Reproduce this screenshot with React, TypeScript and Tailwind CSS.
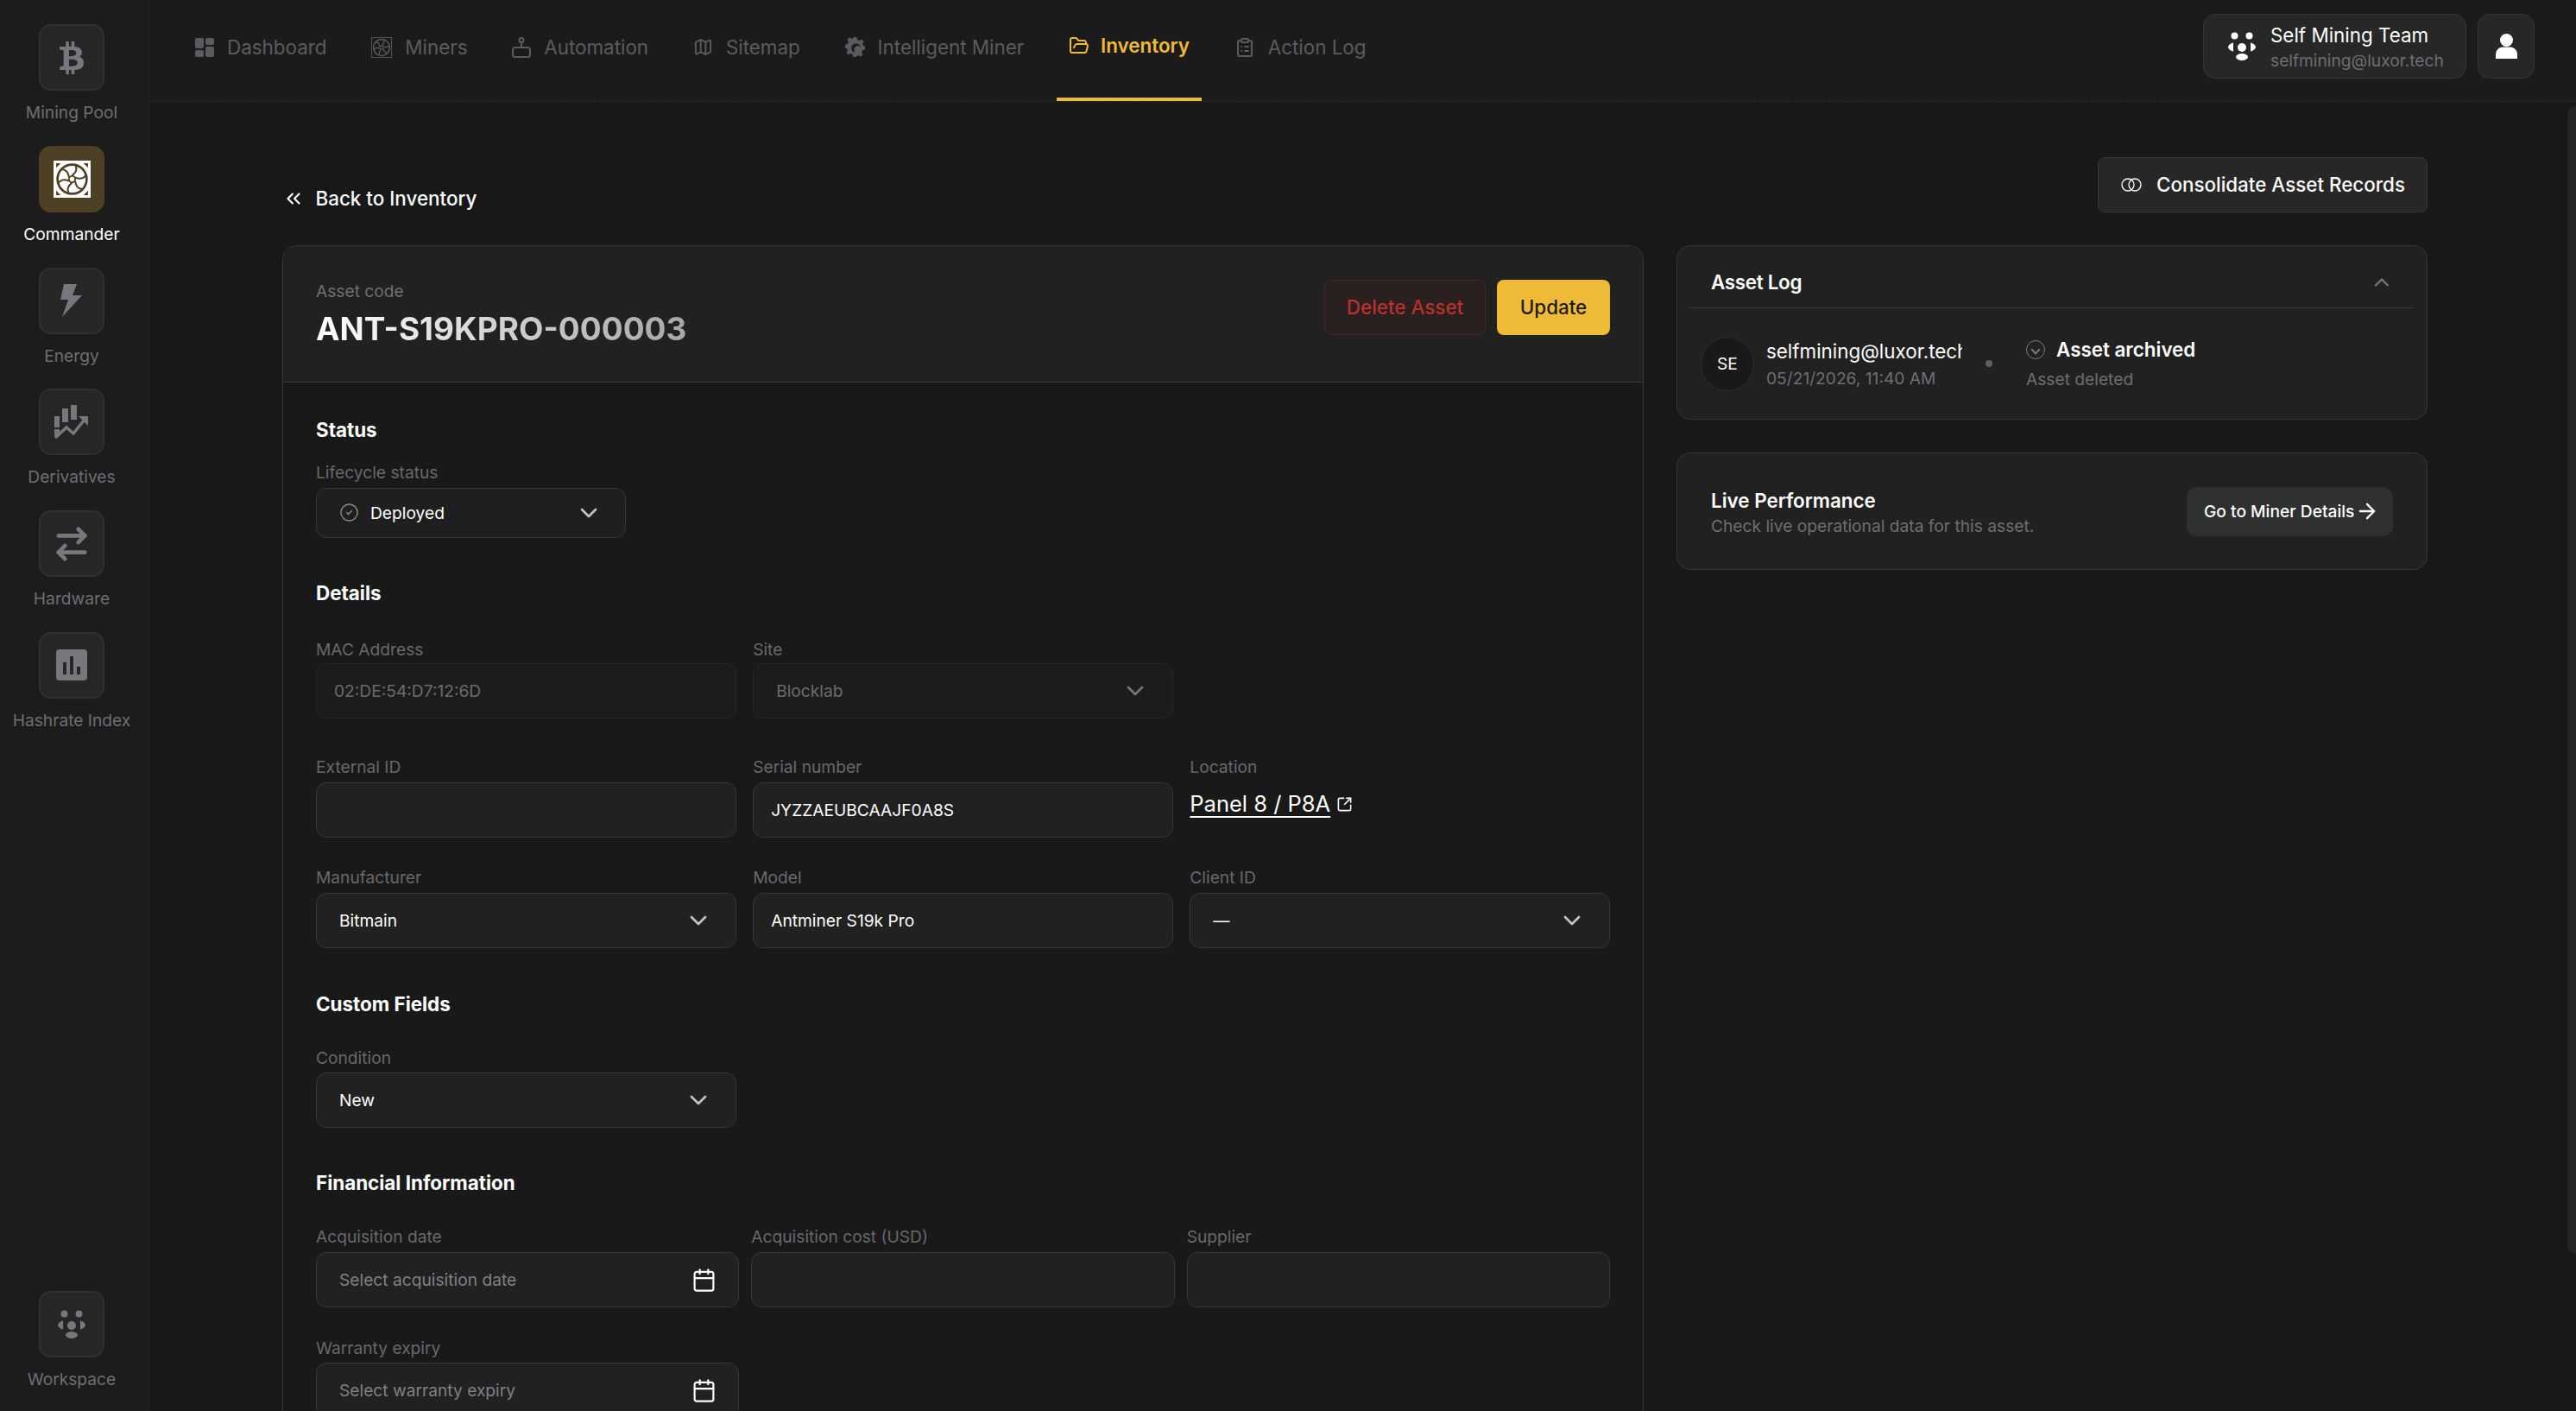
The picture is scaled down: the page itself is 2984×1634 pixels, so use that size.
import React from 'react';
import {
  ArrowRight,
  ArrowRightLeft,
  Calendar,
  ChevronDown,
  ChevronsLeft,
  ChevronUp,
  CircleCheck,
  ClipboardList,
  FolderOpen,
  Map as MapIcon,
  SquareArrowOutUpRight,
} from 'lucide-react';
import { FaBtc } from 'react-icons/fa';

const FanIcon = ({ className = '', ring = '#6a6a6e', bg = 'none' }: { className?: string; ring?: string; bg?: string }) => (
  <svg viewBox="0 0 42 42" className={className}>
    <rect x="0.75" y="0.75" width="40.5" height="40.5" fill={bg} stroke={bg === 'none' ? ring : '#fff'} strokeWidth="1.5" />
    <circle cx="21" cy="21" r="16.5" fill="none" stroke={ring} strokeWidth="2.6" />
    {[0, 60, 120, 180, 240, 300].map((a) => (
      <path key={a} d="M21 17 C25 14 27 10 25 5.5" fill="none" stroke={ring} strokeWidth="2" transform={`rotate(${a} 21 21)`} />
    ))}
    <circle cx="21" cy="21" r="3.6" fill={bg === 'none' ? 'none' : '#fff'} stroke={ring} strokeWidth="1.8" />
    {bg === 'none' ? null : <path d="M3 3h5L3 8zM39 3h-5l5 5zM3 39h5l-5-5zM39 39h-5l5-5z" fill={ring} />}
  </svg>
);

const BoltIcon = () => (
  <svg viewBox="0 0 26 38" className="w-[26px] h-[38px]" fill="#77777d">
    <path d="M4 0h15l-5 13h11L2 38l7-20H0z" />
  </svg>
);

const TrendIcon = () => (
  <svg viewBox="0 0 40 40" className="w-[40px] h-[40px]" fill="#77777d">
    <rect x="0" y="13" width="6" height="13" />
    <rect x="9" y="4" width="7" height="16" />
    <rect x="19" y="0" width="7" height="17" />
    <rect x="0" y="28" width="6" height="8" />
    <path d="M1 38l13-12 8 7 12-15" fill="none" stroke="#77777d" strokeWidth="3.6" />
    <path d="M28 13h11v11z" />
  </svg>
);

const IndexIcon = () => (
  <svg viewBox="0 0 36 36" className="w-[36px] h-[36px]">
    <rect width="36" height="36" rx="4" fill="#77777d" />
    <rect x="8" y="15" width="4" height="14" fill="#262627" />
    <rect x="16" y="8" width="4" height="21" fill="#262627" />
    <rect x="24" y="20" width="4" height="9" fill="#262627" />
  </svg>
);

const TeamIcon = ({ className = '', fill = '#fff' }: { className?: string; fill?: string }) => (
  <svg viewBox="0 0 32 33" className={className} fill={fill}>
    <circle cx="7.5" cy="4.5" r="4" />
    <circle cx="24.5" cy="4.5" r="4" />
    <circle cx="16" cy="18" r="5" />
    <path d="M6 12.5v10c-3-.7-6-3-6-5s3-4.3 6-5zM26 12.5v10c3-.7 6-3 6-5s-3-4.3-6-5z" />
    <ellipse cx="16" cy="29" rx="7" ry="4" />
  </svg>
);

const DashboardIcon = () => (
  <svg viewBox="0 0 22 22" className="w-[22px] h-[22px]" fill="#5b5b5f">
    <rect width="10" height="12" rx="2" />
    <rect x="12" width="10" height="8" rx="2" />
    <rect y="14" width="10" height="8" rx="2" />
    <rect x="12" y="10" width="10" height="12" rx="2" />
  </svg>
);

const JoystickIcon = () => (
  <svg viewBox="0 0 22 24" className="w-[22px] h-[24px]" fill="none" stroke="#5b5b5f" strokeWidth="2">
    <circle cx="11" cy="3.5" r="2.5" />
    <path d="M11 6v6" />
    <rect x="1" y="12" width="20" height="11" rx="2.5" />
  </svg>
);

const GearIcon = () => (
  <svg viewBox="0 0 24 24" className="w-[23px] h-[23px]" fill="#5b5b5f">
    <path d="M10 0h4l.7 3.2 2.6 1.1L20 2.5 22.8 5.3 21 8l1 2.5 2 .5v4l-3 .7-1 2.5 1.500 2.800-2.800 2.800-2.700-1.700-2.500 1V24h-4l-.7-3.200-2.600-1.100L4 21.500 1.200 18.700 3 16l-1-2.500L0 13V9l3-.7 1-2.500L2.500 3 5.300.2 8 2l2-1z" />
    <circle cx="13" cy="13" r="5.5" fill="#1b1b1b" />
    <path d="M15 10l5 3v5l-5 3-4-2.500V13z" />
  </svg>
);

const UserIcon = () => (
  <svg viewBox="0 0 25 29" className="w-[25px] h-[29px]" fill="#fff">
    <circle cx="12.5" cy="7.5" r="7.5" />
    <path d="M0 29v-5c0-5 4-8.5 8-8.5h9c4 0 8 3.5 8 8.5v5z" />
  </svg>
);

const RingsIcon = () => (
  <svg viewBox="0 0 24 16" className="w-[24px] h-[16px]" fill="none" stroke="#fff" strokeWidth="1.3">
    <circle cx="8" cy="8" r="7" />
    <circle cx="16" cy="8" r="7" />
  </svg>
);

const RailItem = ({ label, active, children }: { label: string; active?: boolean; children: React.ReactNode }) => (
  <div className="flex flex-col items-center">
    <div
      className={
        active
          ? 'w-[76px] h-[77px] rounded-[14px] bg-[#4e4024] flex items-center justify-center'
          : 'w-[76px] h-[77px] rounded-[14px] bg-[#262627] border-2 border-[#303034] flex items-center justify-center text-[#77777d]'
      }
    >
      {children}
    </div>
    <span className={active ? 'mt-[11px] h-[28px] leading-[28px] text-[19.2px] text-white whitespace-nowrap' : 'mt-[11px] h-[28px] leading-[28px] text-[19.2px] text-[#6e6e74] whitespace-nowrap'}>
      {label}
    </span>
  </div>
);

const NavTab = ({ label, active, icon }: { label: string; active?: boolean; icon: React.ReactNode }) => (
  <div
    className={
      active
        ? 'flex items-center gap-[13px] px-[14px] pb-[8px] border-b-4 border-[#efbb36] text-[#efbb36] font-semibold text-[22.4px]'
        : 'flex items-center gap-[15px] px-[14px] pb-[8px] text-[#5b5b5f] text-[22.4px]'
    }
  >
    {icon}
    <span>{label}</span>
  </div>
);

const Label = ({ children, className = '' }: { children: React.ReactNode; className?: string }) => (
  <div className={`h-[24px] leading-[24px] text-[19.2px] text-[#68686c] ${className}`}>{children}</div>
);

const Heading = ({ children, className = '' }: { children: React.ReactNode; className?: string }) => (
  <h3 className={`h-[32px] leading-[32px] text-[22.4px] font-bold text-white ${className}`}>{children}</h3>
);

const Select = ({ value, disabled }: { value: string; disabled?: boolean }) => (
  <div
    className={
      disabled
        ? 'h-[64px] rounded-[12px] border border-[#27272a] bg-[#1c1c1c] pl-[26px] pr-[27px] flex items-center justify-between text-[19.2px] text-[#6b6b6e]'
        : 'h-[64px] rounded-[12px] border border-[#35353a] bg-[#212121] pl-[26px] pr-[27px] flex items-center justify-between text-[19.2px] text-white'
    }
  >
    <span>{value}</span>
    <ChevronDown className={disabled ? 'w-[32px] h-[32px] text-[#77777a]' : 'w-[32px] h-[32px] text-[#c4c4c6]'} strokeWidth={2} />
  </div>
);

const TextBox = ({ value = '', disabled }: { value?: string; disabled?: boolean }) => (
  <input
    readOnly
    value={value}
    className={
      disabled
        ? 'w-full h-[64px] rounded-[12px] border border-[#27272a] bg-[#1c1c1c] px-[20px] text-[19.2px] text-[#6b6b6e] outline-none'
        : 'w-full h-[64px] rounded-[12px] border border-[#35353a] bg-[#212121] px-[20px] text-[19.2px] text-white outline-none'
    }
  />
);

const DateBox = ({ placeholder }: { placeholder: string }) => (
  <div className="h-[64px] rounded-[12px] border border-[#35353a] bg-[#212121] pl-[26px] pr-[25px] flex items-center justify-between text-[19.2px] text-[#808084]">
    <span>{placeholder}</span>
    <Calendar className="w-[29px] h-[29px] text-white" strokeWidth={1.8} />
  </div>
);

export default function App() {
  return (
    <div className="relative w-[2984px] h-[1634px] overflow-hidden flex bg-[#181818] font-['Inter',sans-serif]">
      <aside className="w-[173px] shrink-0 h-full bg-[#1c1c1d] border-r border-[#232325] pt-[28px] pb-[23px] pr-[6px] flex flex-col justify-between items-center">
        <div className="flex flex-col items-center gap-[24.8px]">
          <RailItem label="Mining Pool">
            <FaBtc className="w-[38px] h-[38px]" />
          </RailItem>
          <RailItem label="Commander" active>
            <FanIcon className="w-[43px] h-[43px]" ring="#4e4024" bg="#ffffff" />
          </RailItem>
          <RailItem label="Energy">
            <BoltIcon />
          </RailItem>
          <RailItem label="Derivatives">
            <TrendIcon />
          </RailItem>
          <RailItem label="Hardware">
            <ArrowRightLeft className="w-[46px] h-[46px]" strokeWidth={2.4} />
          </RailItem>
          <RailItem label="Hashrate Index">
            <IndexIcon />
          </RailItem>
        </div>
        <RailItem label="Workspace">
          <TeamIcon className="w-[32px] h-[33px]" fill="#77777d" />
        </RailItem>
      </aside>

      <div className="flex-1 min-w-0 flex flex-col">
        <header className="h-[118px] shrink-0 bg-[#1b1b1b] border-b border-dashed border-[#2b2b2c] pl-[39px] pr-[48px] flex justify-between">
          <nav className="flex gap-[23.8px]">
            <NavTab label="Dashboard" icon={<DashboardIcon />} />
            <NavTab label="Miners" icon={<FanIcon className="w-[24px] h-[24px]" ring="#5b5b5f" />} />
            <NavTab label="Automation" icon={<JoystickIcon />} />
            <NavTab label="Sitemap" icon={<MapIcon className="w-[23px] h-[23px]" strokeWidth={2} />} />
            <NavTab label="Intelligent Miner" icon={<GearIcon />} />
            <NavTab label="Inventory" active icon={<FolderOpen className="w-[24px] h-[24px]" strokeWidth={2} />} />
            <NavTab label="Action Log" icon={<ClipboardList className="w-[24px] h-[26px]" strokeWidth={2} />} />
          </nav>
          <div className="flex gap-[13px] pt-[16px]">
            <div className="w-[305px] h-[75px] rounded-[14px] bg-[#272727] border border-[#35353a] pl-[28px] flex items-center gap-[17px]">
              <TeamIcon className="w-[32px] h-[33px]" />
              <div className="flex flex-col">
                <span className="text-[22.4px] leading-[32px] text-white whitespace-nowrap">Self Mining Team</span>
                <span className="text-[19.2px] leading-[26px] text-[#6e6e72] whitespace-nowrap">selfmining@luxor.tech</span>
              </div>
            </div>
            <div className="w-[66px] h-[75px] rounded-[14px] bg-[#272727] border border-[#35353a] flex items-center justify-center">
              <UserIcon />
            </div>
          </div>
        </header>

        <main className="flex-1 min-h-0 pl-[154px] pr-[172px]">
          <div className="pt-[64px] flex justify-between items-end">
            <div className="flex items-center gap-[12.5px] h-[32px] text-[22.4px] font-medium text-white">
              <ChevronsLeft className="w-[26px] h-[26px]" strokeWidth={2} />
              <span>Back to Inventory</span>
            </div>
            <button className="h-[64px] w-[382px] rounded-[8px] bg-[#272727] border border-[#35353a] pl-[26px] flex items-center gap-[17px] text-[22.4px] font-medium text-white">
              <RingsIcon />
              <span>Consolidate Asset Records</span>
            </button>
          </div>

          <div className="mt-[38px] flex gap-[38px] items-start">
            <section className="w-[1577px] shrink-0 rounded-[16px] border border-[#35353b] bg-[#191919]">
              <div className="h-[158px] rounded-t-[16px] bg-[#212121] border-b border-[#35353b] pl-[38px] pr-[38px] flex justify-between items-start">
                <div className="pt-[40px]">
                  <div className="h-[24px] leading-[24px] text-[19.2px] text-[#6e6e72]">Asset code</div>
                  <h1 className="w-fit mt-[9px] text-[37px] leading-[46px] font-bold bg-linear-to-r from-white to-[#a6a6a6] bg-clip-text text-transparent">
                    ANT-S19KPRO-000003
                  </h1>
                </div>
                <div className="pt-[39px] flex gap-[13px]">
                  <button className="w-[187px] h-[64px] rounded-[8px] bg-[#2a2020] border border-[#452727] text-[22.4px] font-medium text-[#b9312c]">
                    Delete Asset
                  </button>
                  <button className="w-[131px] h-[64px] rounded-[8px] bg-[#efbb36] text-[22.4px] font-medium text-[#1b1b1b]">
                    Update
                  </button>
                </div>
              </div>

              <div className="pt-[39px] pl-[38px] pr-[38px] pb-[60px]">
                <Heading>Status</Heading>
                <Label className="mt-[21px] mb-[6px]">Lifecycle status</Label>
                <div className="w-[359px] h-[58px] rounded-[12px] border border-[#35353a] bg-[#1f1f1f] pl-[26px] pr-[26px] flex items-center justify-between text-[19.2px] text-white">
                  <span className="flex items-center gap-[13px]">
                    <CircleCheck className="w-[23px] h-[23px] text-[#8a8a8e]" strokeWidth={1.5} />
                    Deployed
                  </span>
                  <ChevronDown className="w-[32px] h-[32px] text-[#c4c4c6]" strokeWidth={2} />
                </div>

                <Heading className="mt-[48px]">Details</Heading>
                <div className="mt-[37px] grid grid-cols-3 gap-x-[19.5px]">
                  <div>
                    <Label className="mb-[4px]">MAC Address</Label>
                    <TextBox value="02:DE:54:D7:12:6D" disabled />
                  </div>
                  <div>
                    <Label className="mb-[4px]">Site</Label>
                    <Select value="Blocklab" disabled />
                  </div>
                </div>
                <div className="mt-[44px] grid grid-cols-3 gap-x-[19.5px]">
                  <div>
                    <Label className="mb-[6px]">External ID</Label>
                    <TextBox />
                  </div>
                  <div>
                    <Label className="mb-[6px]">Serial number</Label>
                    <TextBox value="JYZZAEUBCAAJF0A8S" />
                  </div>
                  <div>
                    <Label className="mb-[12px]">Location</Label>
                    <div className="flex items-center gap-[7px] h-[38px]">
                      <a className="text-[25.5px] leading-[36px] text-white underline underline-offset-[5px]">Panel 8 / P8A</a>
                      <SquareArrowOutUpRight className="w-[19px] h-[19px] text-white" strokeWidth={2} />
                    </div>
                  </div>
                </div>
                <div className="mt-[34px] grid grid-cols-3 gap-x-[19.5px]">
                  <div>
                    <Label className="mb-[6px]">Manufacturer</Label>
                    <Select value="Bitmain" />
                  </div>
                  <div>
                    <Label className="mb-[6px]">Model</Label>
                    <TextBox value="Antminer S19k Pro" />
                  </div>
                  <div>
                    <Label className="mb-[6px]">Client ID</Label>
                    <Select value="—" />
                  </div>
                </div>

                <Heading className="mt-[49px]">Custom Fields</Heading>
                <div className="mt-[34px] grid grid-cols-3 gap-x-[19.5px]">
                  <div>
                    <Label className="mb-[5px]">Condition</Label>
                    <Select value="New" />
                  </div>
                </div>

                <Heading className="mt-[48px]">Financial Information</Heading>
                <div className="mt-[34px] grid grid-cols-3 gap-x-[14px]">
                  <div>
                    <Label className="mb-[6px]">Acquisition date</Label>
                    <DateBox placeholder="Select acquisition date" />
                  </div>
                  <div>
                    <Label className="mb-[6px]">Acquisition cost (USD)</Label>
                    <TextBox />
                  </div>
                  <div>
                    <Label className="mb-[6px]">Supplier</Label>
                    <TextBox />
                  </div>
                </div>
                <div className="mt-[35px] grid grid-cols-3 gap-x-[14px]">
                  <div>
                    <Label className="mb-[5px]">Warranty expiry</Label>
                    <DateBox placeholder="Select warranty expiry" />
                  </div>
                </div>
              </div>
            </section>

            <div className="w-[870px] shrink-0 flex flex-col gap-[38px]">
              <section className="h-[202px] rounded-[16px] border border-[#35353b] bg-[#212121] px-[13px]">
                <div className="h-[72px] border-b border-[#35353b] pt-[12px] pl-[26px] pr-[25px] flex items-center justify-between">
                  <span className="text-[22.4px] tracking-[-0.3px] font-semibold text-white">Asset Log</span>
                  <ChevronUp className="w-[28px] h-[28px] text-[#77777a]" strokeWidth={2} />
                </div>
                <div className="pt-[32px] pl-[14px] flex items-center">
                  <div className="w-[62px] h-[63px] shrink-0 rounded-full bg-[#191919] border border-[#2e2e30] flex items-center justify-center text-[19.2px] text-white">
                    SE
                  </div>
                  <div className="ml-[14px] w-[227px] shrink-0 overflow-hidden pt-[2px]">
                    <div className="text-[22.4px] leading-[30px] text-white whitespace-nowrap">selfmining@luxor.tech</div>
                    <div className="mt-[1px] text-[19.2px] leading-[30px] text-[#6e6e72] whitespace-nowrap">05/21/2026, 11:40 AM</div>
                  </div>
                  <div className="ml-[27px] w-[8px] h-[8px] rounded-full bg-[#5f5f60]" />
                  <div className="ml-[39px] pt-[1px]">
                    <div className="flex items-center gap-[13px] h-[30px]">
                      <span className="w-[22px] h-[22px] rounded-full border border-[#7a7a7e] flex items-center justify-center">
                        <span className="w-[8px] h-[8px] rotate-45 border-r-2 border-b-2 border-[#7a7a7e]" />
                      </span>
                      <span className="text-[22.4px] font-semibold text-white">Asset archived</span>
                    </div>
                    <div className="mt-[5px] text-[19.2px] leading-[28px] text-[#6e6e72]">Asset deleted</div>
                  </div>
                </div>
              </section>

              <section className="h-[136px] rounded-[16px] border border-[#35353b] bg-[#212121] pl-[39px] pr-[39px] flex items-center justify-between">
                <div className="pt-[4px]">
                  <div className="text-[22.4px] leading-[30px] font-semibold text-white">Live Performance</div>
                  <div className="text-[19.2px] leading-[28px] text-[#6e6e72]">Check live operational data for this asset.</div>
                </div>
                <button className="w-[239px] h-[57px] rounded-[12px] bg-[#2f3030] pl-[20px] flex items-center gap-[1px] text-[19.2px] font-medium text-white">
                  Go to Miner Details
                  <ArrowRight className="w-[28px] h-[28px]" strokeWidth={2} />
                </button>
              </section>
            </div>
          </div>
        </main>
      </div>

      <div className="absolute right-0 top-[123px] w-[10px] h-[1329px] rounded-l-full bg-[#242425]" />
    </div>
  );
}
